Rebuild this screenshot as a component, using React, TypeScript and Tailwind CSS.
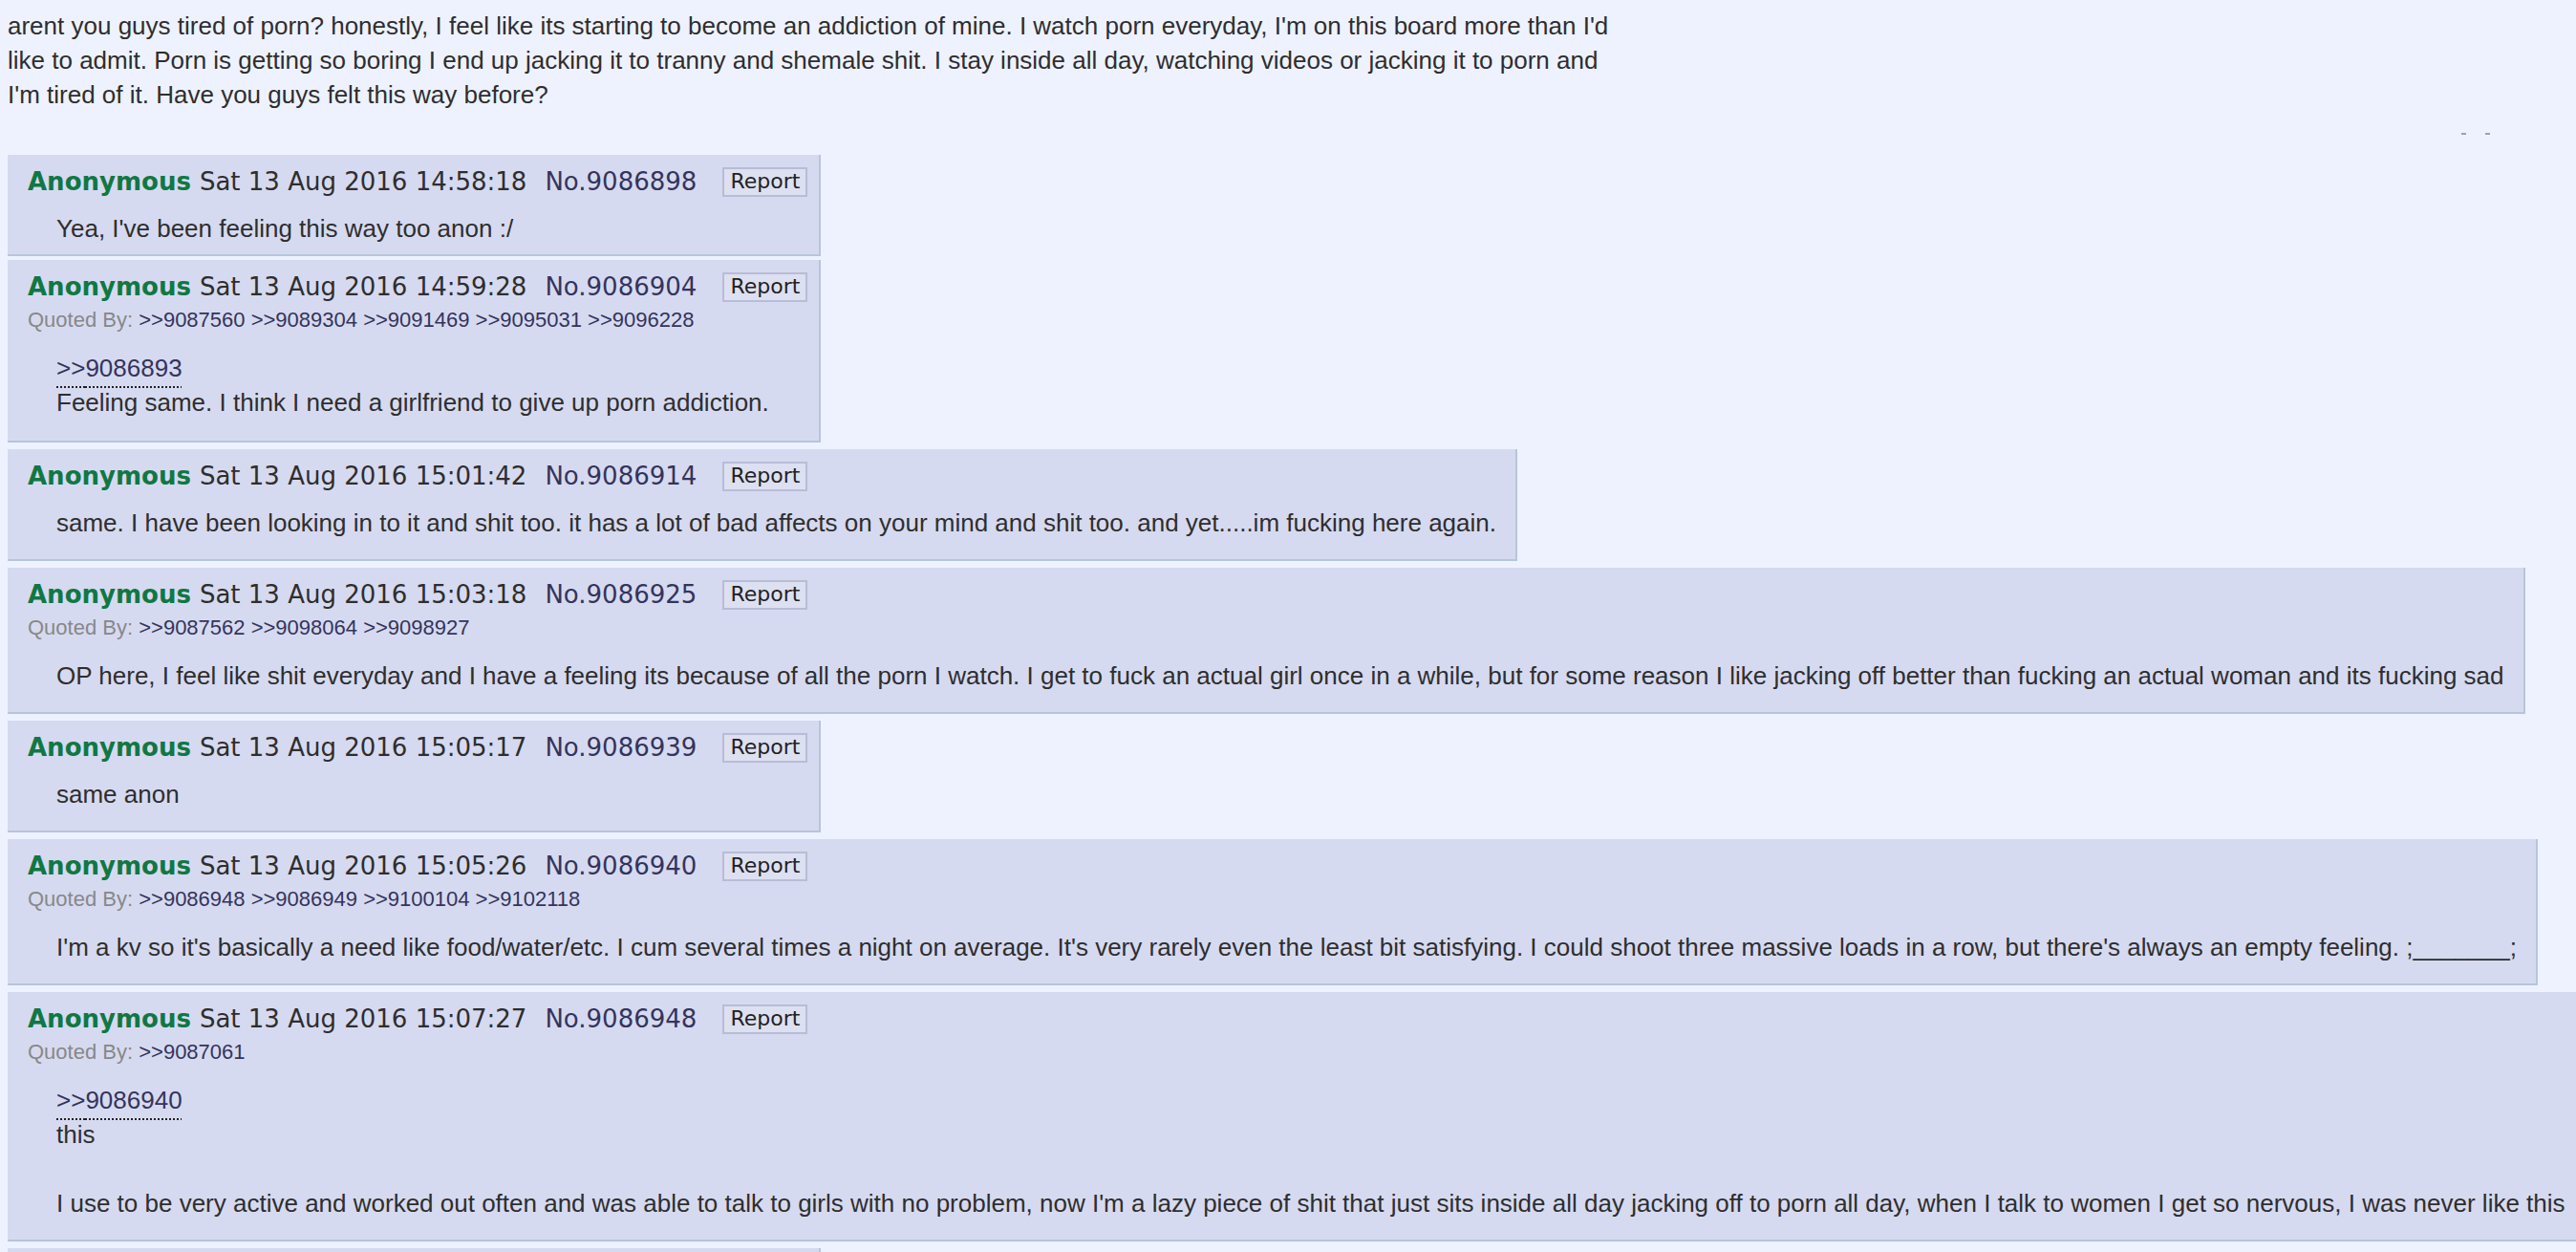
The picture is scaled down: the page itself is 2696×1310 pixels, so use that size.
import React from 'react';

type Line = string | { quote: string };

interface Post {
    id: string;
    time: string;
    quotedBy?: string[];
    lines: Line[];
    pad: string;
    gap: string;
}

const posts: Post[] = [
    {
        id: '9086898',
        time: '14:58:18',
        lines: ["Yea, I've been feeling this way too anon :/"],
        pad: 'pb-[9px]',
        gap: 'mb-[4px]',
    },
    {
        id: '9086904',
        time: '14:59:28',
        quotedBy: ['9087560', '9089304', '9091469', '9095031', '9096228'],
        lines: [{ quote: '9086893' }, 'Feeling same. I think I need a girlfriend to give up porn addiction.'],
        pad: 'pb-[22px]',
        gap: 'mb-[7px]',
    },
    {
        id: '9086914',
        time: '15:01:42',
        lines: [
            'same. I have been looking in to it and shit too. it has a lot of bad affects on your mind and shit too. and yet.....im fucking here again.',
        ],
        pad: 'pb-[20px]',
        gap: 'mb-[7px]',
    },
    {
        id: '9086925',
        time: '15:03:18',
        quotedBy: ['9087562', '9098064', '9098927'],
        lines: [
            'OP here, I feel like shit everyday and I have a feeling its because of all the porn I watch. I get to fuck an actual girl once in a while, but for some reason I like jacking off better than fucking an actual woman and its fucking sad',
        ],
        pad: 'pb-[20px]',
        gap: 'mb-[7px]',
    },
    {
        id: '9086939',
        time: '15:05:17',
        lines: ['same anon'],
        pad: 'pb-[20px]',
        gap: 'mb-[7px]',
    },
    {
        id: '9086940',
        time: '15:05:26',
        quotedBy: ['9086948', '9086949', '9100104', '9102118'],
        lines: [
            "I'm a kv so it's basically a need like food/water/etc. I cum several times a night on average. It's very rarely even the least bit satisfying. I could shoot three massive loads in a row, but there's always an empty feeling. ;_______;",
        ],
        pad: 'pb-[20px]',
        gap: 'mb-[7px]',
    },
    {
        id: '9086948',
        time: '15:07:27',
        quotedBy: ['9087061'],
        lines: [
            { quote: '9086940' },
            'this',
            '',
            "I use to be very active and worked out often and was able to talk to girls with no problem, now I'm a lazy piece of shit that just sits inside all day jacking off to porn all day, when I talk to women I get so nervous, I was never like this",
        ],
        pad: 'pb-[20px]',
        gap: 'mb-[7px]',
    },
    {
        id: '9086949',
        time: '15:07:41',
        lines: ['same'],
        pad: 'pb-[20px]',
        gap: 'mb-[7px]',
    },
];

function PostBox({ post }: { post: Post }) {
    return (
        <div className={`flex flex-col w-max bg-[#d6daf0] border-r-2 border-b-2 border-[#b7c5d9] pl-[21px] pr-[12px] pt-[10px] ${post.pad} ${post.gap}`}>
            {/* Header */}
            <div className="flex items-center h-9 whitespace-nowrap font-['DejaVu_Sans',Verdana,sans-serif] text-[26px] leading-9">
                <span className="font-bold text-[#117743]">Anonymous</span>
                <span className="ml-[9px] text-[#2e2e2e]">Sat 13 Aug 2016 {post.time}</span>
                <span className="ml-[19px] text-[#34345c]">No.{post.id}</span>
                <span className="ml-[27px] h-[31px] px-[6px] flex items-center border-2 border-[#b8bcd6] bg-[#dde0f1] text-[22px] leading-none text-[#222]">
                    Report
                </span>
            </div>

            {post.quotedBy && (
                <div className="mt-[4px] mb-[6px] whitespace-nowrap font-['Liberation_Sans',Arial,sans-serif] text-[22px] leading-[26px]">
                    <span className="text-[#888]">Quoted By:</span>
                    {post.quotedBy.map((q) => (
                        <span key={q} className="text-[#34345c]"> &gt;&gt;{q}</span>
                    ))}
                </div>
            )}

            {/* Comment */}
            <div className="mt-[13px] ml-[30px] mr-[8px] whitespace-nowrap font-['Liberation_Sans',Arial,sans-serif] text-[26px] leading-9 text-[#2e2e2e]">
                {post.lines.map((line, i) =>
                    typeof line === 'string' ? (
                        line === '' ? <div key={i} className="h-9" /> : <div key={i}>{line}</div>
                    ) : (
                        <div key={i}>
                            <span className="text-[#34345c] underline decoration-dotted decoration-2 decoration-[#222] underline-offset-[10px]">
                                &gt;&gt;{line.quote}
                            </span>
                        </div>
                    )
                )}
            </div>
        </div>
    );
}

export default function App() {
    return (
        <div className="relative w-[2696px] h-[1310px] overflow-hidden bg-[#eef2ff] pl-2 pt-[9px]">
            {/* OP comment */}
            <div className="mb-[45px] whitespace-nowrap font-['Liberation_Sans',Arial,sans-serif] text-[26px] leading-9 text-[#2e2e2e]">
                <div>arent you guys tired of porn? honestly, I feel like its starting to become an addiction of mine. I watch porn everyday, I'm on this board more than I'd</div>
                <div>like to admit. Porn is getting so boring I end up jacking it to tranny and shemale shit. I stay inside all day, watching videos or jacking it to porn and</div>
                <div>I'm tired of it. Have you guys felt this way before?</div>
            </div>

            {/* faint marks at the right edge of the thread */}
            <div className="absolute left-[2576px] top-[139px] w-[5px] h-[2px] bg-[#9aa0b8]" />
            <div className="absolute left-[2601px] top-[139px] w-[5px] h-[2px] bg-[#9aa0b8]" />

            {posts.map((p) => (
                <PostBox key={p.id} post={p} />
            ))}
        </div>
    );
}
